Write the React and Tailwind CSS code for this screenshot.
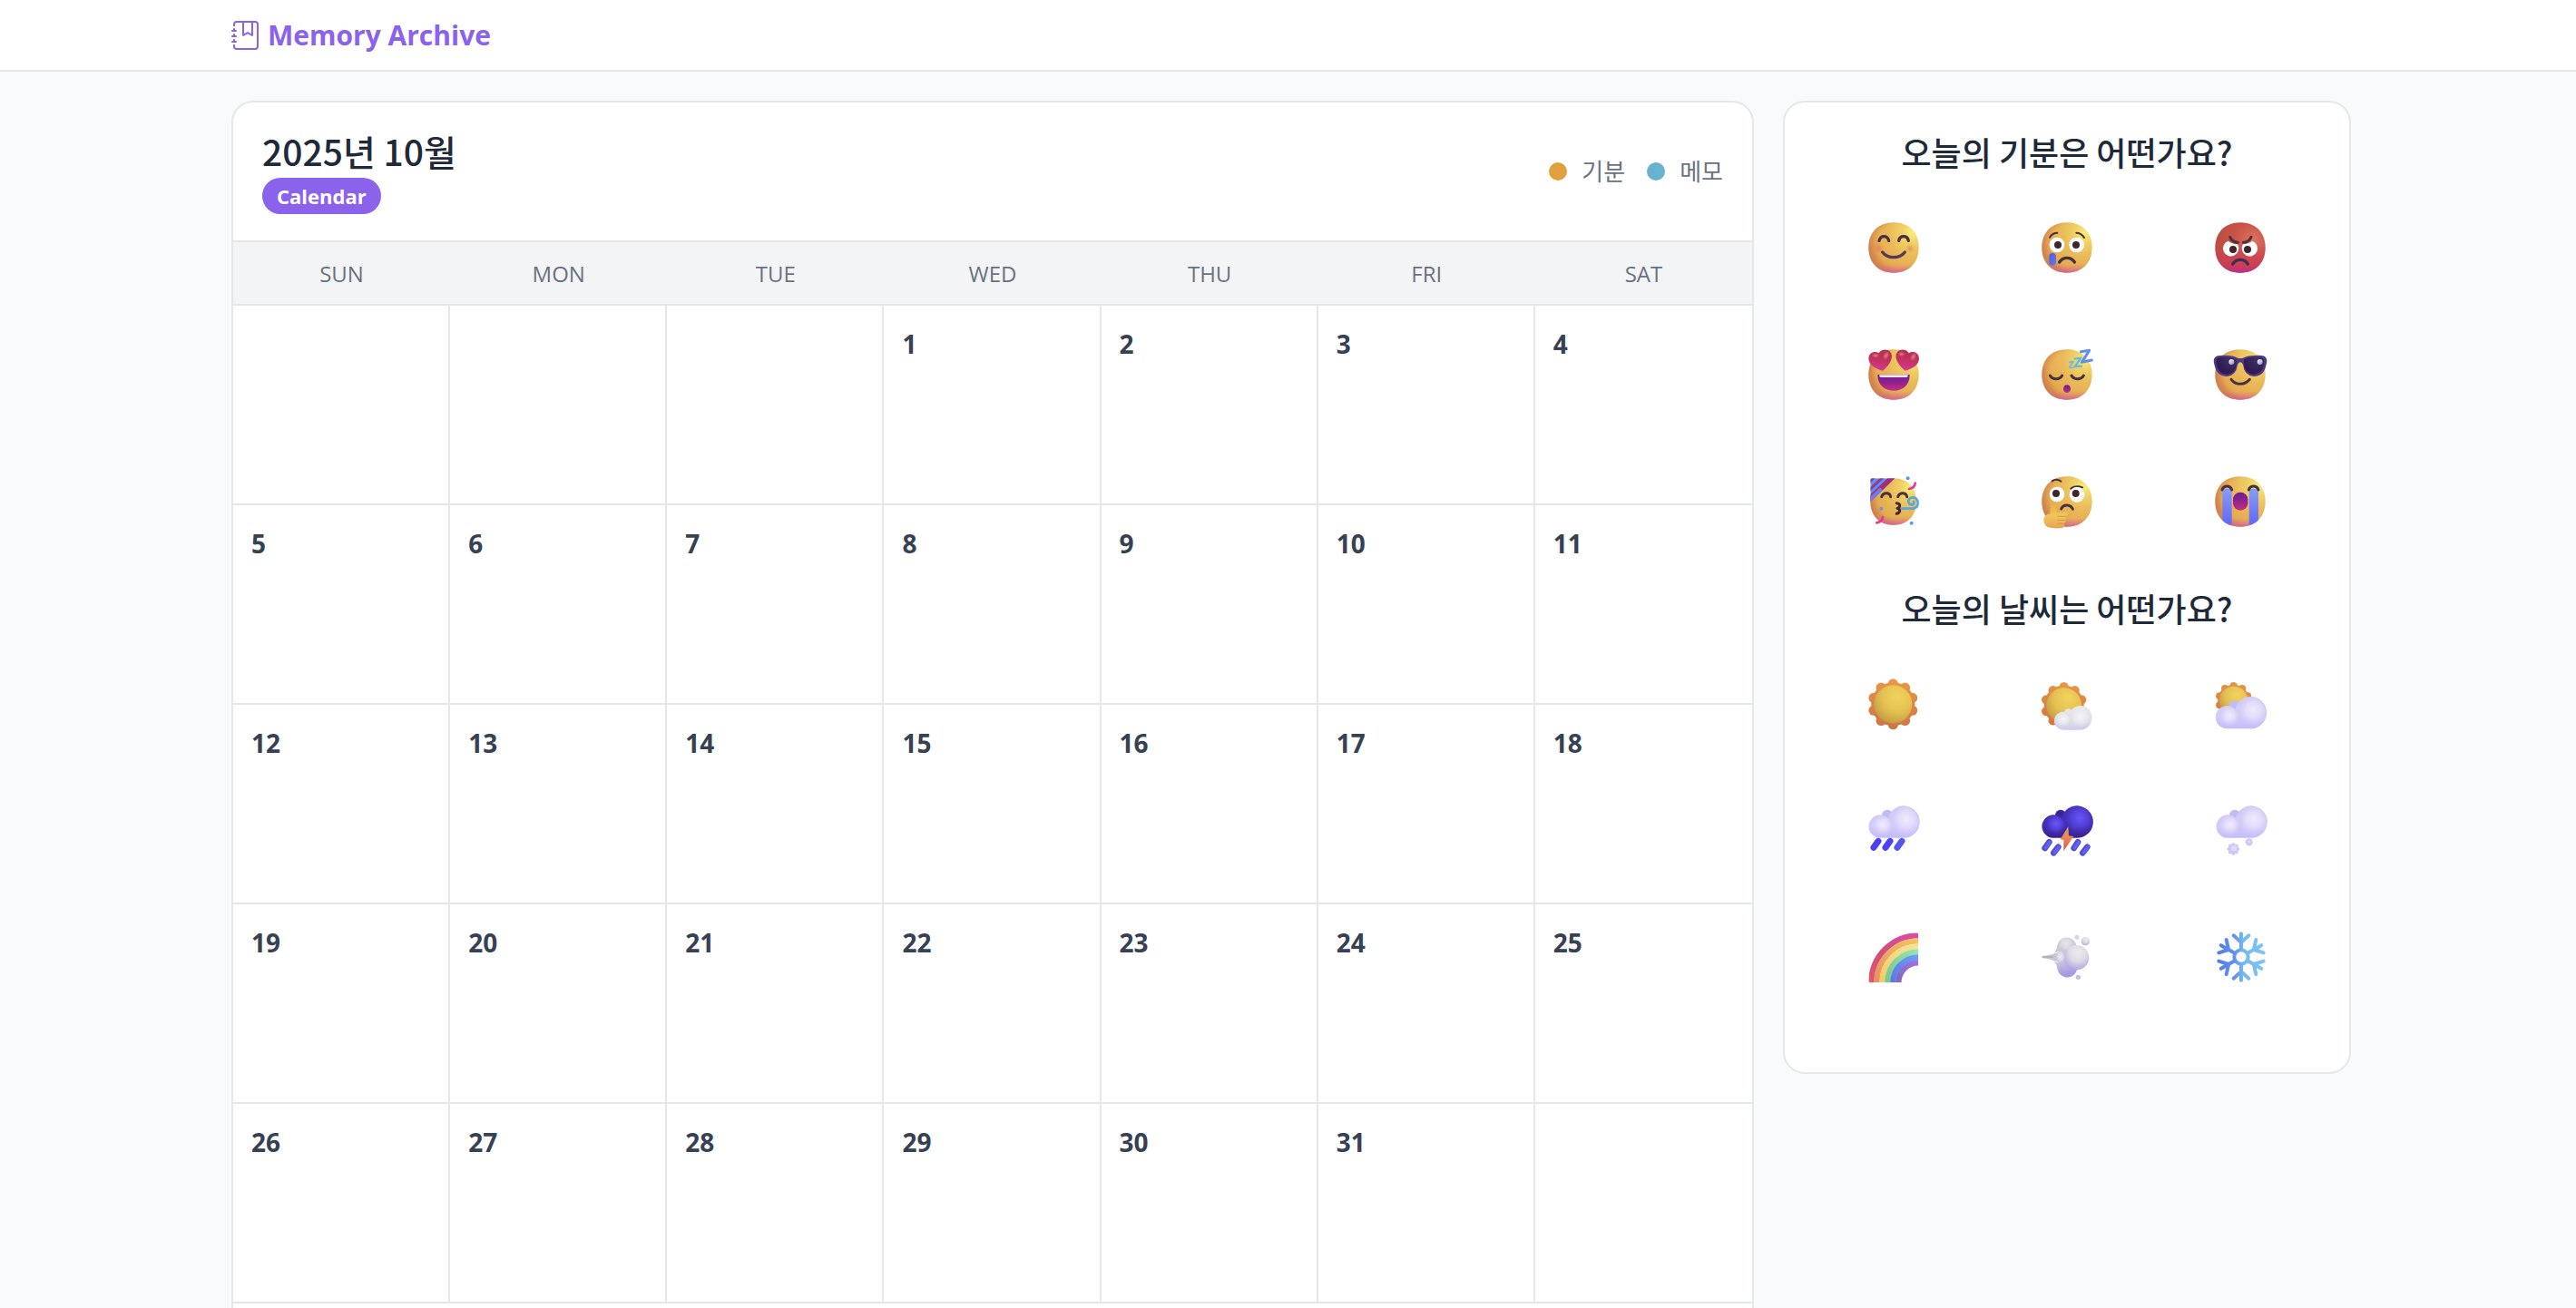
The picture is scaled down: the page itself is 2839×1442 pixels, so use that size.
import React from "react";
import { BsJournalBookmark } from "react-icons/bs";

const DAYS = ["SUN", "MON", "TUE", "WED", "THU", "FRI", "SAT"];
const LEADING_BLANKS = 3;
const DAYS_IN_MONTH = 31;
const WEEKS = 5;
const INK = "#49323f";

const rows = Array.from({ length: WEEKS }, (_, w) =>
  Array.from({ length: 7 }, (_, d) => {
    const n = w * 7 + d - LEADING_BLANKS + 1;
    return n >= 1 && n <= DAYS_IN_MONTH ? n : null;
  })
);

function Stops({ list }) {
  return list.map(([o, c, a = 1]) => <stop key={o} offset={o} stopColor={c} stopOpacity={a} />);
}

function Gradients() {
  return (
    <svg className="absolute size-0" aria-hidden="true">
      <defs>
        <radialGradient id="face" cx="0.86" cy="0.2" r="0.9">
          <Stops list={[[0, "#f7ee7c"], [0.22, "#f0d266"], [0.5, "#eabb5a"], [0.85, "#e5ab50"], [1, "#d9984d"]]} />
        </radialGradient>
        <radialGradient id="faceEdge" cx="0.62" cy="0.46" r="0.64">
          <Stops list={[[0.7, "#c96a50", 0], [1, "#c4604f", 0.5]]} />
        </radialGradient>
        <linearGradient id="faceFoot" x1="0" y1="0" x2="0" y2="1">
          <Stops list={[[0.83, "#d659a8", 0], [1, "#d659a8", 0.7]]} />
        </linearGradient>
        <radialGradient id="angry" cx="0.75" cy="0.35" r="0.8">
          <Stops list={[[0, "#da745f"], [0.45, "#cb5349"], [1, "#b84e3c"]]} />
        </radialGradient>
        <linearGradient id="angryFoot" x1="0" y1="0" x2="0" y2="1">
          <Stops list={[[0.4, "#d33c60", 0], [0.85, "#d0365c", 0.7], [1, "#b82a9c", 0.95]]} />
        </linearGradient>
        <radialGradient id="cheek">
          <Stops list={[[0, "#e8705a", 0.6], [1, "#e8705a", 0]]} />
        </radialGradient>
        <linearGradient id="mouth" x1="0" y1="0" x2="0" y2="1">
          <Stops list={[[0, "#771e95"], [0.4, "#85228f"], [1, "#c82c84"]]} />
        </linearGradient>
        <linearGradient id="tear" x1="0" y1="0" x2="1" y2="1">
          <Stops list={[[0, "#4a5ad8"], [1, "#6b78f5"]]} />
        </linearGradient>
        <linearGradient id="stream" x1="0" y1="0" x2="0" y2="1">
          <Stops list={[[0, "#869cf6"], [1, "#6068f6"]]} />
        </linearGradient>
        <linearGradient id="heart" x1="0.6" y1="0" x2="0.4" y2="1">
          <Stops list={[[0, "#b72f4c"], [0.5, "#c2325f"], [1, "#d8379a"]]} />
        </linearGradient>
        <radialGradient id="heartShine">
          <Stops list={[[0, "#e6879a", 0.9], [1, "#e6879a", 0]]} />
        </radialGradient>
        <radialGradient id="lens" cx="0.75" cy="0.15" r="0.9">
          <Stops list={[[0, "#3f3266"], [1, "#2c1750"]]} />
        </radialGradient>
        <linearGradient id="glint" x1="0" y1="0" x2="1" y2="1">
          <Stops list={[[0, "#ffffff"], [1, "#8f89b0"]]} />
        </linearGradient>
        <linearGradient id="hand" x1="0" y1="0" x2="0" y2="1">
          <Stops list={[[0, "#e3b045"], [0.5, "#f1c659"], [1, "#e3a552"]]} />
        </linearGradient>
        <linearGradient id="ray" gradientUnits="userSpaceOnUse" x1="10" y1="-84" x2="-10" y2="84">
          <Stops list={[[0, "#e99a45"], [0.5, "#da8546"], [1, "#cd7448"]]} />
        </linearGradient>
        <radialGradient id="disc" cx="0.62" cy="0.3" r="0.8">
          <Stops list={[[0, "#f2d45c"], [0.5, "#e5c153"], [1, "#bd953f"]]} />
        </radialGradient>
        <linearGradient id="cloudWhite" x1="0" y1="0" x2="0" y2="1">
          <Stops list={[[0, "#e9e9ed"], [0.65, "#dedde4"], [1, "#cfc9f2"]]} />
        </linearGradient>
        <linearGradient id="cloudLilac" x1="0" y1="0" x2="0" y2="1">
          <Stops list={[[0, "#cfc9f3"], [0.6, "#d5cdf7"], [1, "#c2bbfa"]]} />
        </linearGradient>
        <linearGradient id="cloudStorm" x1="0" y1="0" x2="0" y2="1">
          <Stops list={[[0, "#4433bd"], [0.6, "#432fb6"], [1, "#381f8c"]]} />
        </linearGradient>
        <radialGradient id="puffWhite" cx="0.5" cy="0.45" r="0.5">
          <Stops list={[[0, "#f6f6f8"], [0.6, "#ececf0", 0.7], [1, "#dcdbe4", 0]]} />
        </radialGradient>
        <radialGradient id="puffLilac" cx="0.62" cy="0.42" r="0.55">
          <Stops list={[[0, "#f1eafd"], [0.45, "#e6defb", 0.85], [1, "#c9c2f8", 0.1]]} />
        </radialGradient>
        <radialGradient id="puffStorm" cx="0.62" cy="0.38" r="0.55">
          <Stops list={[[0, "#6a58f8"], [0.5, "#5642dc", 0.85], [1, "#3d29a6", 0.1]]} />
        </radialGradient>
        <linearGradient id="bolt" x1="0" y1="0" x2="0" y2="1">
          <Stops list={[[0, "#e5a355"], [0.5, "#e88452"], [1, "#e04f4c"]]} />
        </linearGradient>
        <linearGradient id="red" x1="0" y1="1" x2="1" y2="0">
          <Stops list={[[0, "#e0586a"], [0.4, "#cf4f76"], [1, "#dc4ba8"]]} />
        </linearGradient>
        <linearGradient id="orange" x1="0" y1="1" x2="1" y2="0">
          <Stops list={[[0, "#e98f62"], [1, "#f0c562"]]} />
        </linearGradient>
        <linearGradient id="yellow" x1="0" y1="1" x2="1" y2="0">
          <Stops list={[[0, "#f1cd66"], [1, "#f5e49b"]]} />
        </linearGradient>
        <linearGradient id="green" x1="0" y1="1" x2="1" y2="0">
          <Stops list={[[0, "#79c98c"], [1, "#93e4ae"]]} />
        </linearGradient>
        <linearGradient id="blue" x1="0" y1="1" x2="1" y2="0">
          <Stops list={[[0, "#5c78e6"], [1, "#6c9df5"]]} />
        </linearGradient>
        <linearGradient id="violet" x1="0" y1="1" x2="1" y2="0">
          <Stops list={[[0, "#8265c4"], [1, "#9a74de"]]} />
        </linearGradient>
        <linearGradient id="gust" x1="0" y1="0" x2="0.2" y2="1">
          <Stops list={[[0, "#dad5da"], [0.45, "#cbc4d2"], [0.7, "#c9c0e0"], [1, "#a99ae0"]]} />
        </linearGradient>
        <radialGradient id="gustPuff" cx="0.55" cy="0.3" r="0.7">
          <Stops list={[[0, "#edebef"], [0.5, "#dfdbe6"], [1, "#b3a5e4"]]} />
        </radialGradient>
        <linearGradient id="flake" gradientUnits="userSpaceOnUse" x1="1242" y1="0" x2="1400" y2="0">
          <Stops list={[[0, "#557de8"], [0.35, "#628fec"], [0.55, "#76b9f0"], [1, "#7cc6f5"]]} />
        </linearGradient>
      </defs>
    </svg>
  );
}

/* Every icon is drawn in a 192-unit square whose corner is (x, y). */
function Icon({ x, y, children }) {
  return (
    <svg
      viewBox={`${x} ${y} 192 192`}
      className="size-16"
      fill="none"
      strokeLinecap="round"
      strokeLinejoin="round"
      aria-hidden="true"
    >
      {children}
    </svg>
  );
}

const facePath = (cx, cy, rx = 83, ry = 83) => {
  const a = rx * 0.667;
  const b = ry * 0.552;
  return `M${cx} ${cy + ry}C${cx + a} ${cy + ry} ${cx + rx} ${cy + b} ${cx + rx} ${cy}S${cx + a} ${cy - ry} ${cx} ${cy - ry}S${cx - rx} ${cy - b} ${cx - rx} ${cy}S${cx - a} ${cy + ry} ${cx} ${cy + ry}Z`;
};

function Face({ cx, cy, rx, ry, angry }) {
  const d = facePath(cx, cy, rx, ry);
  return (
    <>
      <path d={d} fill={angry ? "url(#angry)" : "url(#face)"} />
      {!angry && <path d={d} fill="url(#faceEdge)" />}
      <path d={d} fill={angry ? "url(#angryFoot)" : "url(#faceFoot)"} />
    </>
  );
}

const wavy = (cx, cy, r, amp, n) => {
  const pts = [];
  for (let i = 0; i < 180; i++) {
    const t = (i / 180) * Math.PI * 2;
    const q = r + amp * Math.cos(n * t);
    pts.push(`${(cx + q * Math.sin(t)).toFixed(1)} ${(cy - q * Math.cos(t)).toFixed(1)}`);
  }
  return `M${pts.join("L")}Z`;
};

const PETALS = Array.from({ length: 10 }, (_, i) => (i * Math.PI) / 5);

function Sun({ cx, cy, outer, disc }) {
  return (
    <g transform={`translate(${cx} ${cy})`}>
      <circle r={outer * 0.86} fill="url(#ray)" />
      {PETALS.map((t) => (
        <circle
          key={t}
          cx={outer * 0.8 * Math.sin(t)}
          cy={-outer * 0.8 * Math.cos(t)}
          r={outer * 0.2}
          fill="url(#ray)"
        />
      ))}
      <circle r={disc} fill="url(#disc)" />
    </g>
  );
}

const CLOUD_FILL = { lilac: "url(#cloudLilac)", storm: "url(#cloudStorm)" };
const CLOUD_PUFF = { lilac: "url(#puffLilac)", storm: "url(#puffStorm)" };
const CLOUD_BUMP = { lilac: "#c0bcf2", storm: "#3a2699" };

function Cloud({ x, y, tone = "lilac" }) {
  return (
    <g transform={`translate(${x} ${y})`}>
      <circle cx="62" cy="31" r="18" fill={CLOUD_BUMP[tone]} />
      <path d="M38 106a38 38 0 1 1 27-65A53 53 0 1 1 112 106Z" fill={CLOUD_FILL[tone]} />
      <circle cx="112" cy="53" r="53" fill={CLOUD_PUFF[tone]} />
      <circle cx="38" cy="68" r="37" fill={CLOUD_PUFF[tone]} />
    </g>
  );
}

function Eyes({ a, b, pa, pb, r = 25 }) {
  return (
    <>
      <circle cx={a[0]} cy={a[1]} r={r} fill="#fff" />
      <circle cx={b[0]} cy={b[1]} r={r} fill="#fff" />
      <circle cx={pa[0]} cy={pa[1]} r="12" fill="#3d2630" />
      <circle cx={pb[0]} cy={pb[1]} r="12" fill="#3d2630" />
    </>
  );
}

const Happy = () => (
  <Icon x={74} y={64}>
    <Face cx={170} cy={160} />
    <circle cx="119" cy="163" r="19" fill="url(#cheek)" />
    <circle cx="224" cy="163" r="16" fill="url(#cheek)" />
    <g stroke={INK} strokeWidth="10">
      <path d="M122 137Q126 123 138 123T154 137M187 137Q190 123 203 123T219 137" />
      <path d="M133 175Q146 192 170 192T207 175" stroke="#533a58" />
    </g>
  </Icon>
);

const Crying = () => (
  <Icon x={648} y={64}>
    <Face cx={744} cy={160} />
    <path d="M687 126Q696 111 712 111M775 111Q791 111 801 127" stroke={INK} strokeWidth="6" />
    <Eyes a={[711, 151]} b={[776, 151]} pa={[714, 151]} pb={[774, 151]} />
    <rect x="685" y="178" width="23" height="41" rx="11" fill="url(#tear)" />
    <path d="M719 208Q728 194 744 194T769 208" stroke={INK} strokeWidth="10" />
  </Icon>
);

const Angry = () => (
  <Icon x={622} y={64}>
    <Face cx={718} cy={160} angry />
    <path d="M678 138Q690 148 709 149A26 26 0 1 1 678 138Z" fill="#fff" />
    <path d="M758 138Q746 148 727 149A26 26 0 1 0 758 138Z" fill="#fff" />
    <circle cx="694" cy="166" r="12" fill="#3d2630" />
    <circle cx="742" cy="166" r="12" fill="#3d2630" />
    <path d="M684 125Q690 142 710 143M754 125Q746 142 728 143" stroke={INK} strokeWidth="9" />
    <path d="M693 214Q702 200 718 200T743 214" stroke="#3f2f52" strokeWidth="10" />
  </Icon>
);

const Love = () => (
  <Icon x={74} y={64}>
    <Face cx={170} cy={160} />
    <path d="M117 160H223C223 196 200 213 170 213S117 196 117 160Z" fill="url(#mouth)" />
    <path d="M123 161H217V164Q217 169 212 169H128Q123 169 123 164Z" fill="#f0e8f8" />
    <path d="M134 147C112 142 86 128 87 106C88 86 108 80 121 89C126 76 148 73 158 84C172 98 160 126 134 147Z" fill="url(#heart)" />
    <path d="M208 147C230 142 255 128 254 106C253 86 233 80 220 89C215 76 193 73 183 84C169 98 182 126 208 147Z" fill="url(#heart)" />
    <ellipse cx="145" cy="97" rx="10" ry="16" fill="url(#heartShine)" transform="rotate(25 145 97)" />
    <ellipse cx="110" cy="97" rx="12" ry="8" fill="url(#heartShine)" />
    <ellipse cx="235" cy="101" rx="10" ry="16" fill="url(#heartShine)" transform="rotate(25 235 101)" />
    <ellipse cx="196" cy="92" rx="12" ry="8" fill="url(#heartShine)" />
  </Icon>
);

const Sleepy = () => (
  <Icon x={648} y={64}>
    <Face cx={744} cy={160} />
    <path d="M688 163Q694 174 708 174T728 163M759 163Q765 174 779 174T799 163" stroke={INK} strokeWidth="9" />
    <ellipse cx="744" cy="207" rx="12" ry="13" fill="url(#mouth)" />
    <path d="M752 119L765 117L752 136L766 137" stroke="#7fb3d8" strokeWidth="5" />
    <path d="M770 108L790 105L770 133L792 132" stroke="#66bbe6" strokeWidth="7" />
    <path d="M790 84L818 80L793 119L826 112" stroke="#628ff0" strokeWidth="9" />
  </Icon>
);

const Cool = () => (
  <Icon x={622} y={64}>
    <Face cx={718} cy={160} />
    <path
      d="M632 106Q636 96 660 96Q700 96 711 106L725 106Q738 96 778 96Q801 96 804 106Q808 114 803 130Q796 166 762 166Q732 164 727 128Q724 119 718 119T709 128Q704 164 674 166Q641 166 633 130Q628 114 632 106Z"
      fill="#4d3a7e"
    />
    <path d="M639 109Q645 102 662 102Q702 102 706 112Q708 156 674 159Q645 158 639 125Z" fill="url(#lens)" />
    <path d="M797 109Q791 102 774 102Q734 102 730 112Q728 156 762 159Q791 158 797 125Z" fill="url(#lens)" />
    <circle cx="689" cy="118" r="9" fill="url(#glint)" />
    <circle cx="783" cy="118" r="9" fill="url(#glint)" />
    <path d="M688 176Q700 191 718 191T749 176" stroke={INK} strokeWidth="9" />
  </Icon>
);

const Party = () => (
  <Icon x={74} y={64}>
    <clipPath id="hat">
      <path d="M93 88Q93 83 98 83H174L93 160Z" />
    </clipPath>
    <Face cx={169} cy={160} rx={76} ry={77} />
    <g clipPath="url(#hat)" strokeLinecap="butt">
      <rect x="90" y="80" width="90" height="84" fill="#678af0" />
      <path d="M180 72L85 162" stroke="#a02e7c" strokeWidth="26" />
      <path d="M144 70L80 131M116 70L80 104" stroke="#8a3f8f" strokeWidth="9" />
      <path d="M130 118L85 160" stroke="#6d7cea" strokeWidth="14" />
    </g>
    <path d="M130 144Q134 132 146 132T160 144M184 144Q188 132 200 132T214 144" stroke={INK} strokeWidth="9" />
    <path d="M180 165Q191 166 190 174T182 182Q191 184 190 191T180 200" stroke="#43262f" strokeWidth="9" />
    <path d="M197 183H232Q251 181 250 163Q247 145 232 146Q217 149 219 161Q222 172 233 170Q240 166 236 160" stroke="#58a6dd" strokeWidth="8" />
    <path d="M241 99Q241 113 221 118M134 211Q134 225 114 230" stroke="#e23a9b" strokeWidth="8" />
    <g fill="#5f97ee">
      <circle cx="217" cy="83" r="6" />
      <circle cx="129" cy="183" r="6" />
      <circle cx="229" cy="231" r="6" />
    </g>
  </Icon>
);

const Thinking = () => (
  <Icon x={648} y={64}>
    <Face cx={744} cy={160} />
    <path d="M695 92Q709 82 724 93M757 117Q773 105 795 113" stroke={INK} strokeWidth="6" />
    <Eyes a={[711, 136]} b={[777, 137]} pa={[708, 133]} pb={[773, 133]} />
    <path d="M725 184Q731 171 744 172Q759 173 763 185" stroke={INK} strokeWidth="9" />
    <path
      d="M690 178Q692 165 701 167Q709 169 709 180L710 195L744 192Q751 196 748 203Q747 207 740 208Q744 214 740 219Q741 226 736 231Q738 240 730 247Q700 251 680 244Q666 236 667 218Q668 204 688 200Z"
      fill="url(#hand)"
    />
    <path d="M714 209H740M714 221H739M714 233H735" stroke="#d49a43" strokeWidth="3" />
  </Icon>
);

const Sobbing = () => (
  <Icon x={622} y={484}>
    <clipPath id="sob">
      <path d={facePath(718, 580)} />
    </clipPath>
    <Face cx={718} cy={580} />
    <g clipPath="url(#sob)">
      <rect x="659" y="537" width="31" height="120" rx="4" fill="url(#stream)" />
      <rect x="747" y="537" width="31" height="120" rx="4" fill="url(#stream)" />
    </g>
    <path d="M658 541Q662 529 674 529T690 541M746 541Q750 529 762 529T778 541" stroke={INK} strokeWidth="9" />
    <rect x="694" y="549" width="49" height="60" rx="24" fill="url(#mouth)" />
  </Icon>
);

const Sunny = () => (
  <Icon x={74} y={73}>
    <Sun cx={168} cy={170} outer={84} disc={63} />
  </Icon>
);

const MostlySunny = () => (
  <Icon x={648} y={73}>
    <Sun cx={734} cy={174} outer={77} disc={58} />
    <circle cx="748" cy="198" r="13" fill="#e6e6ea" />
    <path d="M732 255a30 30 0 1 1 19-53A39 40 0 1 1 788 255Z" fill="url(#cloudWhite)" />
    <circle cx="788" cy="214" r="38" fill="url(#puffWhite)" />
    <circle cx="732" cy="222" r="28" fill="url(#puffWhite)" />
  </Icon>
);

const Cloudy = () => (
  <Icon x={622} y={73}>
    <Sun cx={696} cy={158} outer={61} disc={47} />
    <Cloud x={636} y={145} />
  </Icon>
);

const Rainy = () => (
  <Icon x={74} y={73}>
    <Cloud x={87} y={86} />
    <path d="M119 203L104 224M158 203L143 224" stroke="#4b41f2" strokeWidth="21" />
    <path d="M197 203L182 224" stroke="#5257f0" strokeWidth="21" />
  </Icon>
);

const Stormy = () => (
  <Icon x={648} y={73}>
    <Cloud x={661} y={86} tone="storm" />
    <path d="M685 206L671 226M715 222L700 242M780 206L767 226M811 222L796 242" stroke="#504fd0" strokeWidth="20" />
    <path d="M687 206L674 225M717 222L703 241M782 206L770 225M813 222L799 241" stroke="#645ff6" strokeWidth="10" />
    <path d="M748 155L722 197L733 199V236L766 187L750 185Z" fill="url(#bolt)" />
  </Icon>
);

const Snowy = () => (
  <Icon x={1222} y={73}>
    <Cloud x={1238} y={86} />
    <path d={wavy(1295, 229, 19, 2, 8)} fill="#cdc6f8" />
    <circle cx="1297" cy="226" r="10" fill="#e0d9fc" />
    <path d={wavy(1347, 206, 12, 1, 8)} fill="#cdc6f8" />
    <circle cx="1348" cy="204" r="5" fill="#ddd6fc" />
  </Icon>
);

const BANDS = ["url(#red)", "url(#orange)", "url(#yellow)", "url(#green)", "url(#blue)", "url(#violet)"];

const Rainbow = () => (
  <Icon x={74} y={493}>
    <clipPath id="bow">
      <path d="M87 506H244Q252 506 252 514V671H93Q87 671 87 665Z" />
    </clipPath>
    <g clipPath="url(#bow)" strokeLinecap="butt">
      {BANDS.map((c, i) => {
        const r = 156 - i * 18;
        return <path key={c} d={`M${252 - r} 672A${r} ${r} 0 0 1 253 ${671 - r}`} stroke={c} strokeWidth="19" />;
      })}
    </g>
  </Icon>
);

const Windy = () => (
  <Icon x={648} y={493}>
    <path
      d="M663 582Q694 581 704 570Q711 562 712 546A32 32 0 0 1 774 545L790 620Q776 626 775 634A33 33 0 0 1 712 624Q710 608 700 600Q688 592 663 590Z"
      fill="url(#gust)"
    />
    <circle cx="776" cy="588" r="41" fill="url(#gustPuff)" />
    <circle cx="741" cy="545" r="26" fill="url(#puffWhite)" opacity="0.6" />
    <ellipse cx="722" cy="587" rx="16" ry="22" fill="url(#puffWhite)" opacity="0.8" />
    <path d="M663 586H696" stroke="#9f97a8" strokeWidth="5" opacity="0.6" />
    <path d="M688 576Q702 576 714 570M688 598Q702 597 714 604" stroke="#fff" strokeWidth="3" />
    <circle cx="777" cy="521" r="8" fill="#dbd7de" />
    <circle cx="805" cy="534" r="14" fill="url(#gustPuff)" />
    <circle cx="781" cy="653" r="8" fill="#c6bbe9" />
  </Icon>
);

const flakePath = [0, 60, 120, 180, 240, 300]
  .map((deg) => {
    const t = (deg * Math.PI) / 180;
    const p = (x, y) =>
      `${(1321 + x * Math.cos(t) - y * Math.sin(t)).toFixed(1)} ${(586 + x * Math.sin(t) + y * Math.cos(t)).toFixed(1)}`;
    return `M${p(0, -28)}L${p(0, -77)}M${p(-25, -71)}L${p(0, -48)}L${p(25, -71)}`;
  })
  .join("");

const Snowflake = () => (
  <Icon x={1222} y={493}>
    <path d={flakePath} stroke="url(#flake)" strokeWidth="12" />
    <circle cx="1321" cy="586" r="23" stroke="url(#flake)" strokeWidth="12" />
  </Icon>
);

const MOODS = [
  ["행복", Happy],
  ["슬픔", Crying],
  ["화남", Angry],
  ["사랑", Love],
  ["졸림", Sleepy],
  ["멋짐", Cool],
  ["축하", Party],
  ["고민", Thinking],
  ["눈물", Sobbing],
];

const WEATHER = [
  ["맑음", Sunny],
  ["대체로 맑음", MostlySunny],
  ["흐림", Cloudy],
  ["비", Rainy],
  ["천둥번개", Stormy],
  ["눈", Snowy],
  ["무지개", Rainbow],
  ["바람", Windy],
  ["한파", Snowflake],
];

function Picker({ title, items }) {
  return (
    <section>
      <h2 className="mb-1.5 text-center font-['Noto_Sans_CJK_KR',sans-serif] text-[36px] leading-[60px] font-medium text-gray-800">
        {title}
      </h2>
      <div className="grid grid-cols-3">
        {items.map(([label, Drawing]) => (
          <button key={label} type="button" aria-label={label} className="flex items-center justify-center py-[38px]">
            <Drawing />
          </button>
        ))}
      </div>
    </section>
  );
}

export default function App() {
  return (
    <div className="min-h-screen bg-[#f9fafc] font-['Open_Sans','Noto_Sans_CJK_KR',sans-serif] text-gray-800">
      <Gradients />
      <header className="border-b-2 border-gray-200 bg-white pl-[7px]">
        <div className="mx-auto flex h-[77px] w-full max-w-[2336px] items-center">
          <a href="#" className="flex items-center gap-2 text-[30px] leading-10 font-bold text-[#8b62ec]">
            <BsJournalBookmark className="size-8" />
            Memory Archive
          </a>
        </div>
      </header>

      <main className="pt-8 pl-[7px]">
        <div className="mx-auto grid w-full max-w-[2336px] grid-cols-[1678fr_626fr] items-start gap-8">
          <section className="overflow-hidden rounded-3xl border-2 border-gray-200 bg-white pb-12">
            <div className="flex items-center justify-between border-b-2 border-gray-200 px-8 py-6">
              <div className="pb-[5px]">
                <h1 className="font-['Noto_Sans_CJK_KR',sans-serif] text-[39px] leading-[59px] font-medium">
                  2025년 10월
                </h1>
                <span className="block w-fit rounded-full bg-[#8b62ec] px-4 text-[22px] leading-10 font-bold text-white">
                  Calendar
                </span>
              </div>
              <ul className="flex gap-6 text-[26px] leading-9 text-gray-500">
                <li className="flex items-center gap-4">
                  <span className="size-5 rounded-full bg-[#e0a03c]" />
                  기분
                </li>
                <li className="flex items-center gap-4">
                  <span className="size-5 rounded-full bg-[#67b2cf]" />
                  메모
                </li>
              </ul>
            </div>
            <table className="w-full table-fixed border-separate border-spacing-0">
              <thead>
                <tr className="bg-gray-100 text-[24px] leading-9 text-gray-500">
                  {DAYS.map((d) => (
                    <th key={d} scope="col" className="border-b-2 border-gray-200 pt-[17px] pb-[15px] font-normal">
                      {d}
                    </th>
                  ))}
                </tr>
              </thead>
              <tbody>
                {rows.map((week, w) => (
                  <tr key={w}>
                    {week.map((n, d) => (
                      <td
                        key={d}
                        className="h-[220px] border-r-2 border-b-2 border-gray-200 px-5 py-6 align-top text-[28px] leading-9 font-bold text-gray-700 last:border-r-0"
                      >
                        {n}
                      </td>
                    ))}
                  </tr>
                ))}
              </tbody>
            </table>
          </section>

          <aside className="flex flex-col gap-[17px] rounded-3xl border-2 border-gray-200 bg-white px-6 pt-6 pb-14">
            <Picker title="오늘의 기분은 어떤가요?" items={MOODS} />
            <Picker title="오늘의 날씨는 어떤가요?" items={WEATHER} />
          </aside>
        </div>
      </main>
    </div>
  );
}
